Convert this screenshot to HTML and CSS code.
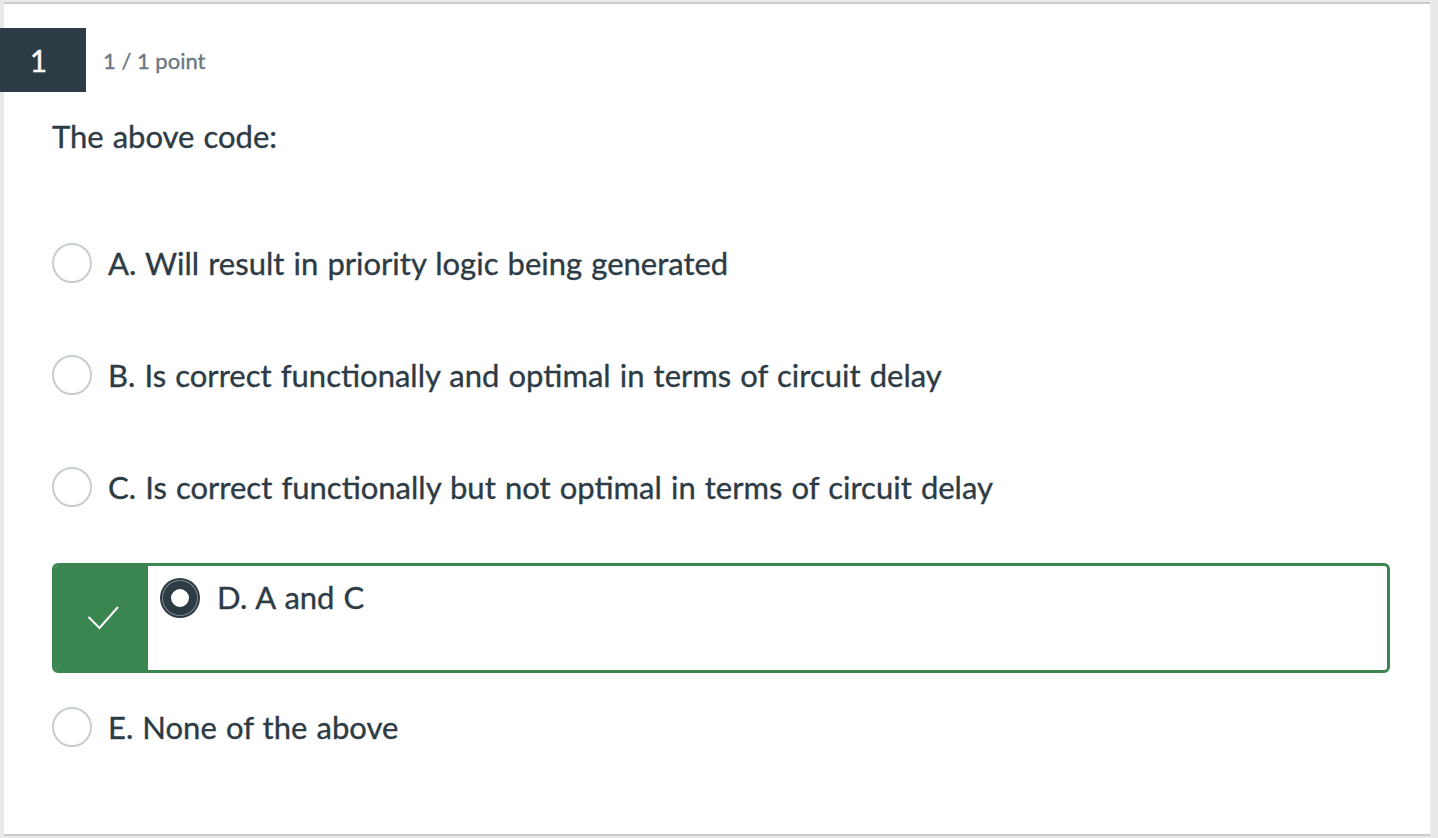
FILE: index.html
```html
<!DOCTYPE html>
<html lang="en">
<head>
<meta charset="utf-8">
<title>Quiz question</title>
<link rel="stylesheet" href="styles.css">
</head>
<body>
<div class="card">
  <div class="q-header">
    <div class="q-number">1</div>
    <div class="q-points">1 / 1 point</div>
  </div>
  <div class="q-text">The above code:</div>
  <div class="answers">
    <div class="answer">
      <span class="radio"></span>
      <span class="label">A. Will result in priority logic being generated</span>
    </div>
    <div class="answer">
      <span class="radio"></span>
      <span class="label">B. Is correct functionally and optimal in terms of circuit delay</span>
    </div>
    <div class="answer answer-c">
      <span class="radio"></span>
      <span class="label">C. Is correct functionally but not optimal in terms of circuit delay</span>
    </div>
    <div class="answer-correct">
      <div class="correct-flag">
        <svg width="32" height="24" viewBox="0 0 32 24"><polyline points="1.5,11 12.5,22 31,1" fill="none" stroke="#ffffff" stroke-width="2"/></svg>
      </div>
      <div class="correct-body">
        <span class="radio radio-selected"></span>
        <span class="label">D. A and C</span>
      </div>
    </div>
    <div class="answer answer-e">
      <span class="radio"></span>
      <span class="label">E. None of the above</span>
    </div>
  </div>
</div>
</body>
</html>
```

FILE: styles.css
```css
html, body {
  margin: 0;
  padding: 0;
}
body {
  background: #e9e9e9;
  font-family: Lato, "Open Sans", "Liberation Sans", sans-serif;
  color: #2d3b45;
  height: 838px;
  overflow: hidden;
  -webkit-text-stroke: 0.35px currentColor;
}
.card {
  margin: 2px 0 0 4px;
  width: 1426px;
  height: 830px;
  background: #ffffff;
  border-top: 2px solid #c7cdd1;
  border-bottom: 2px solid #c7cdd1;
}
.q-header {
  display: flex;
  align-items: center;
  margin: 24px 0 0 -4px;
}
.q-number {
  width: 86px;
  height: 64px;
  box-sizing: border-box;
  padding-right: 9px;
  background: #2d3b45;
  color: #ffffff;
  font-size: 30px;
  display: flex;
  align-items: center;
  justify-content: center;
}
.q-points {
  margin-left: 17px;
  font-size: 22px;
  color: #6b7780;
}
.q-text {
  margin: 23px 0 0 48px;
  font-size: 31px;
  line-height: 42px;
  word-spacing: 1px;
}
.answers {
  margin: 86px 0 0 48px;
  width: 1338px;
  display: flex;
  flex-direction: column;
}
.answer {
  display: flex;
  align-items: center;
  height: 40px;
  margin-bottom: 72px;
}
.answer.answer-c {
  margin-bottom: 56px;
}
.answer.answer-e {
  margin: 34px 0 0;
}
.radio {
  flex: none;
  box-sizing: border-box;
  width: 40px;
  height: 40px;
  border: 2px solid #c7cdd1;
  border-radius: 50%;
  background: #ffffff;
}
.label {
  margin-left: 16px;
  font-size: 31px;
  line-height: 38px;
  word-spacing: 1.2px;
  white-space: nowrap;
}
.answer-correct {
  display: flex;
  height: 104px;
  border: 3px solid #3b8551;
  border-radius: 6px;
  overflow: hidden;
}
.correct-flag {
  width: 93px;
  flex: none;
  background: #3b8551;
  display: flex;
  align-items: center;
  justify-content: center;
  padding-left: 2px;
  box-sizing: border-box;
}
.correct-body {
  display: flex;
  align-items: flex-start;
  padding: 12px 0 0 12px;
}
.radio.radio-selected {
  width: 34px;
  height: 34px;
  margin: 3px;
  border: 8px solid #2d3b45;
  background: #ffffff;
  box-shadow: 0 0 0 1px #7d878e, 0 0 0 3px #2d3b45;
}
.correct-body .label {
  margin-left: 17px;
}
```
